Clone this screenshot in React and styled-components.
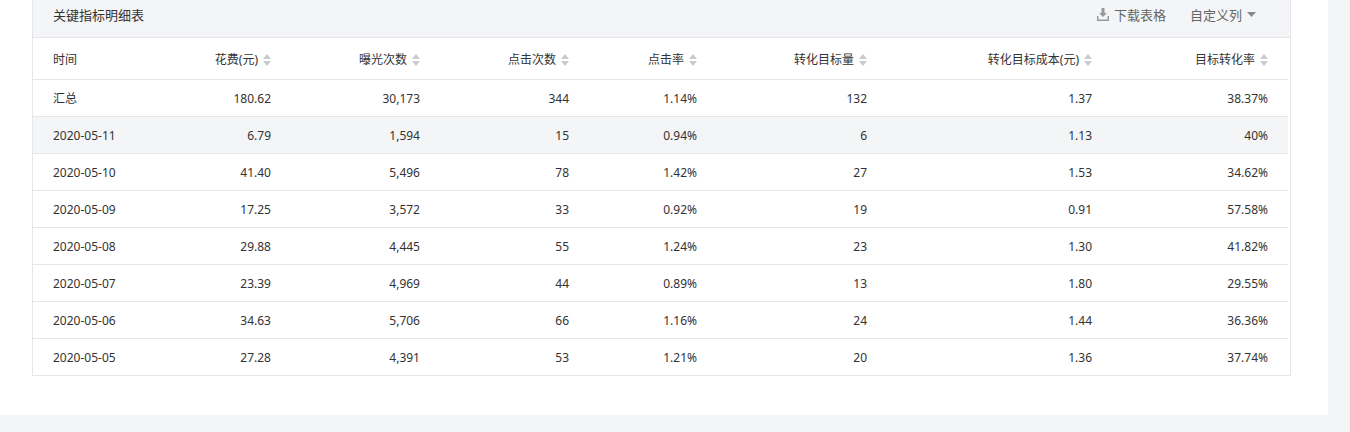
import React from 'react';
import styled, { createGlobalStyle } from 'styled-components';

const Global = createGlobalStyle`
  body { margin: 0; background: #f4f5f7; font-family: "Noto Sans", "Noto Sans CJK SC", sans-serif; }
`;

const Card = styled.div`
  width: 1328px;
  height: 415px;
  background: #fff;
  padding: 0 0 0 32px;
  box-sizing: border-box;
`;

const Panel = styled.div`
  width: 1257px;
  border: 1px solid #e4e6ea;
  border-top: none;
`;

const Bar = styled.div`
  height: 38px;
  background: #f4f5f7;
  border-bottom: 1px solid #e4e6ea;
  display: flex;
  align-items: flex-start;
  padding: 5px 34px 0 20px;
  box-sizing: border-box;
  font-size: 13px;
  color: #333;
`;

const Title = styled.div`
  flex: 1;
`;

const Action = styled.div`
  display: flex;
  align-items: center;
  gap: 5px;
  color: #666;
  margin-left: 24px;
`;

const Table = styled.table`
  border-collapse: collapse;
  width: 1255px;
  table-layout: fixed;
  font-size: 12px;
  color: #333;
`;

const Th = styled.th`
  height: 41px;
  font-weight: normal;
  text-align: ${p => (p.left ? 'left' : 'right')};
  padding: 0 20px;
  border-bottom: 1px solid #e4e6ea;
  white-space: nowrap;
`;

const Tr = styled.tr`
  background: ${p => (p.hl ? '#f4f5f7' : '#fff')};
  &:not(:last-child) td { border-bottom: 1px solid #e4e6ea; }
`;

const Td = styled.td`
  height: 36px;
  padding: 0 20px;
  text-align: ${p => (p.left ? 'left' : 'right')};
`;

const Sort = () => (
  <svg width="8" height="12" viewBox="0 0 8 12" style={{ marginLeft: 5, verticalAlign: -2 }}>
    <path d="M4 0L8 5H0z" fill="#c8cbd0" />
    <path d="M4 12L8 7H0z" fill="#c8cbd0" />
  </svg>
);

const cols = [
  ['时间', 130], ['花费(元)', 128], ['曝光次数', 149], ['点击次数', 149],
  ['点击率', 128], ['转化目标量', 170], ['转化目标成本(元)', 225], ['目标转化率', 176],
];

const rows = [
  ['汇总', '180.62', '30,173', '344', '1.14%', '132', '1.37', '38.37%'],
  ['2020-05-11', '6.79', '1,594', '15', '0.94%', '6', '1.13', '40%'],
  ['2020-05-10', '41.40', '5,496', '78', '1.42%', '27', '1.53', '34.62%'],
  ['2020-05-09', '17.25', '3,572', '33', '0.92%', '19', '0.91', '57.58%'],
  ['2020-05-08', '29.88', '4,445', '55', '1.24%', '23', '1.30', '41.82%'],
  ['2020-05-07', '23.39', '4,969', '44', '0.89%', '13', '1.80', '29.55%'],
  ['2020-05-06', '34.63', '5,706', '66', '1.16%', '24', '1.44', '36.36%'],
  ['2020-05-05', '27.28', '4,391', '53', '1.21%', '20', '1.36', '37.74%'],
];

export default function App() {
  return (
    <Card>
      <Global />
      <Panel>
        <Bar>
          <Title>关键指标明细表</Title>
          <Action>
            <svg width="12" height="13" viewBox="0 0 12 13">
              <path d="M4.5 0h3v5h2.5L6 9 2 5h2.5z" fill="#999" />
              <path d="M0 8h1.5v3.5h9V8H12v5H0z" fill="#999" />
            </svg>
            下载表格
          </Action>
          <Action>
            自定义列
            <svg width="9" height="5" viewBox="0 0 9 5"><path d="M0 0h9L4.5 5z" fill="#888" /></svg>
          </Action>
        </Bar>
        <Table>
          <colgroup>
            {cols.map(([n, w]) => <col key={n} style={{ width: w }} />)}
          </colgroup>
          <thead>
            <tr>
              {cols.map(([n], i) => (
                <Th key={n} left={i === 0}>{n}{i > 0 && <Sort />}</Th>
              ))}
            </tr>
          </thead>
          <tbody>
            {rows.map((r, ri) => (
              <Tr key={ri} hl={ri === 1}>
                {r.map((c, i) => <Td key={i} left={i === 0}>{c}</Td>)}
              </Tr>
            ))}
          </tbody>
        </Table>
      </Panel>
    </Card>
  );
}
